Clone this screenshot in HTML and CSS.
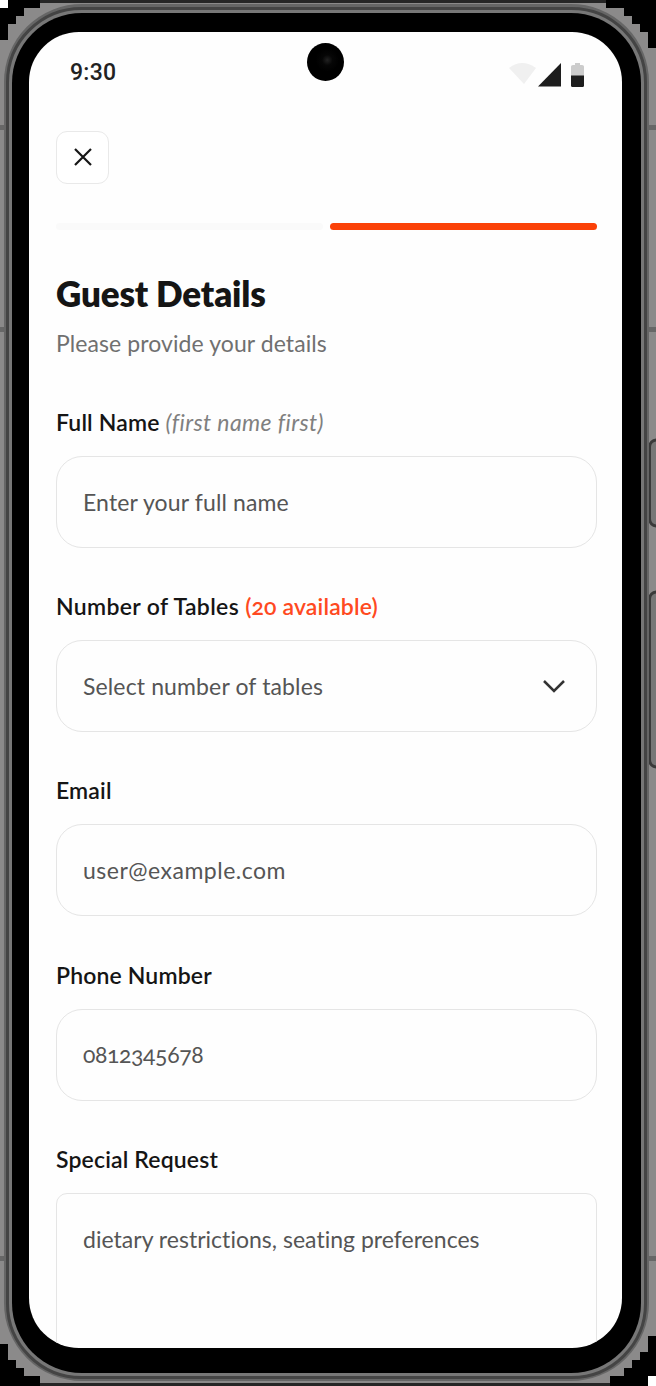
FILE: index.html
```html
<!DOCTYPE html>
<html lang="en">
<head>
<meta charset="utf-8">
<title>Guest Details</title>
<link rel="stylesheet" href="styles.css">
</head>
<body>
<div class="stage">
  <svg class="shell" width="656" height="1386" viewBox="0 0 656 1386" aria-hidden="true">
    <rect width="656" height="1386" fill="#8b8a8a"/>
    <path fill="#444" d="M0 125h14v5H0zM0 327h14v5H0zM0 1256h14v5H0zM640 125h16v5h-16zM640 327h16v5h-16zM640 1256h16v5h-16z" opacity=".5"/>
    <path stroke="#262626" stroke-width="3" d="M40 1.500H606M40 1384.500H610"/>
    <g fill="#777" stroke="#3a3a3a" stroke-width="3"><rect x="649.500" y="440" width="20" height="86" rx="7"/><rect x="649.500" y="592" width="20" height="175" rx="7"/></g>
    <rect x="6" y="6" width="641" height="1373" rx="76" fill="#777" stroke="#666" stroke-width="4"/>
    <rect x="7.500" y="8.500" width="638" height="1369" rx="74" fill="none" stroke="#444" stroke-width="3"/>
    <rect x="12" y="13" width="629" height="1360" rx="70" fill="#000"/>
    <path fill="#000" d="M0 0H40V8H24V16H16V24H8V40H0zM606 0H656V48H648V32H640V24H632V16H624V8H606zM0 1344H8V1360H16V1368H24V1376H40V1386H0zM656 1336H648V1352H640V1360H632V1368H624V1376H610V1386H656z"/>
    <path fill="#fff" d="M0 0H8V8H0zM648 1376H656V1386H648z"/>
  </svg>
  <main class="screen">
    <header class="status">
      <span class="time">9:30</span>
      <svg width="80" height="28" viewBox="0 0 80 28" aria-hidden="true">
        <path d="M-1 6Q12-4 26 6L14 22z" fill="#f0f0f0"/>
        <path d="M28 24.500L51 1V24.500z" fill="#1d1d1d"/>
        <path d="M61 14V4.500Q61 3 63 3H65V1H70V3H72Q74 3 74 4.500V14z" fill="#ccc"/>
        <path d="M61 13.500H74V23.500Q74 25 72.500 25H62.500Q61 25 61 23.500z" fill="#1d1d1d"/>
      </svg>
    </header>
    <button class="close" aria-label="Close"><svg width="18" height="18" viewBox="0 0 18 18"><path d="M1 1L17 17M17 1L1 17" stroke="#161616" stroke-width="2.200"/></svg></button>
    <div class="progress"><i></i><i class="active"></i></div>
    <h1>Guest Details</h1>
    <p class="intro">Please provide your details</p>
    <section class="field"><label>Full Name <em>(first name first)</em></label><div class="input"><span>Enter your full name</span></div></section>
    <section class="field"><label class="tables">Number of Tables <b>(20 available)</b></label><div class="input"><span>Select number of tables</span><svg width="24" height="14" viewBox="0 0 24 14"><path d="M2 2L12 12L22 2" fill="none" stroke="#333" stroke-width="2.500"/></svg></div></section>
    <section class="field"><label>Email</label><div class="input email"><span>user@example.com</span></div></section>
    <section class="field"><label>Phone Number</label><div class="input phone"><span>0812345678</span></div></section>
    <section class="field"><label>Special Request</label><div class="input area"><span>dietary restrictions, seating preferences</span></div></section>
  </main>
  <i class="camera"></i>
</div>
</body>
</html>
```
FILE: styles.css
```css
* { box-sizing: border-box; }
body { margin: 0; font-family: Lato, "Noto Sans", sans-serif; color: #151515; }
.stage { position: relative; width: 656px; height: 1386px; padding: 32px 0 0 29px; overflow: hidden; }
.shell { position: absolute; left: 0; top: 0; }
.screen { position: relative; width: 593px; height: 1316px; padding: 0 25px 0 27px; overflow: hidden; border-radius: 50px; background: #fefefe; }
.camera { position: absolute; left: 307px; top: 43px; width: 37px; height: 38px; border-radius: 50%; background: radial-gradient(circle at 55% 45%, #222 0, #060606 18%, #000 40%); }
.status { display: flex; justify-content: space-between; align-items: center; height: 81px; padding: 0 7px 0 14px; }
.status svg { margin-top: 7px; overflow: visible; }
.time { font: 500 23px Roboto, sans-serif; letter-spacing: .3px; color: #222; }
.close { display: flex; align-items: center; justify-content: center; width: 53px; height: 53px; margin-top: 18px; padding: 0 0 2px; border: 1px solid #e9e9e9; border-radius: 11px; background: #fff; }
.progress { display: grid; grid-template-columns: 1fr 1fr; gap: 7px; margin-top: 39px; }
.progress i { height: 7px; border-radius: 4px; background: #fafafa; }
.progress .active { background: #fb4108; }
h1 { margin: 41px 0 0; font-size: 35px; line-height: 44px; font-weight: 800; letter-spacing: -.15px; }
.intro { margin: 13px 0 48px; font-size: 23px; line-height: 30px; letter-spacing: .08px; color: #707070; }
.field { margin-bottom: 42.2px; }
label { display: block; height: 50px; font-size: 23px; line-height: 33px; font-weight: 600; letter-spacing: .15px; white-space: nowrap; }
label em { font-weight: 400; letter-spacing: .4px; color: #808080; }
label b { font-weight: 600; letter-spacing: .15px; color: #ff4921; font-feature-settings: "onum"; }
label.tables { letter-spacing: .35px; }
.input { display: flex; align-items: center; justify-content: space-between; height: 92px; padding: 0 30px 1px 26px; border: 1px solid #e5e5e5; border-radius: 26px; font-size: 23px; letter-spacing: .13px; color: #555; font-feature-settings: "onum"; }
.input.email { letter-spacing: .5px; }
.input.phone { letter-spacing: -.4px; }
.input.area { align-items: flex-start; height: 220px; padding-top: 31px; border-radius: 11px 11px 0 0; letter-spacing: .02px; }
```
